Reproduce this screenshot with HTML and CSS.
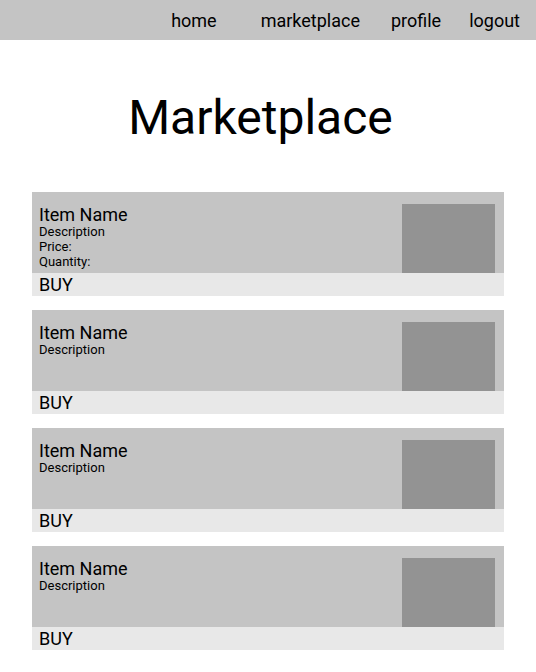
FILE: index.html
```html
<!DOCTYPE html>
<html>
<head>
<meta charset="utf-8">
<link rel="stylesheet" href="styles.css">
</head>
<body>
<nav class="topnav">
  <a class="nav-link" href="#">home</a>
  <a class="nav-link nav-market" href="#">marketplace</a>
  <a class="nav-link nav-profile" href="#">profile</a>
  <a class="nav-link nav-logout" href="#">logout</a>
</nav>
<h1 class="page-title">Marketplace</h1>
<main class="items">
  <section class="item">
    <div class="item-main">
      <div class="item-info">
        <div class="item-name">Item Name</div>
        <div class="item-detail">Description</div>
        <div class="item-detail">Price:</div>
        <div class="item-detail">Quantity:</div>
      </div>
      <div class="item-image"></div>
    </div>
    <div class="item-buy">BUY</div>
  </section>
  <section class="item">
    <div class="item-main">
      <div class="item-info">
        <div class="item-name">Item Name</div>
        <div class="item-detail">Description</div>
      </div>
      <div class="item-image"></div>
    </div>
    <div class="item-buy">BUY</div>
  </section>
  <section class="item">
    <div class="item-main">
      <div class="item-info">
        <div class="item-name">Item Name</div>
        <div class="item-detail">Description</div>
      </div>
      <div class="item-image"></div>
    </div>
    <div class="item-buy">BUY</div>
  </section>
  <section class="item">
    <div class="item-main">
      <div class="item-info">
        <div class="item-name">Item Name</div>
        <div class="item-detail">Description</div>
      </div>
      <div class="item-image"></div>
    </div>
    <div class="item-buy">BUY</div>
  </section>
</main>
</body>
</html>
```

FILE: styles.css
```css
html, body {
  margin: 0;
  padding: 0;
  background: #ffffff;
}

body {
  font-family: Roboto, "Noto Sans", sans-serif;
  color: #000000;
}

.topnav {
  display: flex;
  justify-content: flex-end;
  align-items: center;
  height: 40px;
  background: #c4c4c4;
  padding-right: 16px;
}

.nav-link {
  font-size: 18px;
  color: #000000;
  text-decoration: none;
  line-height: 21px;
}

.nav-market {
  margin-left: 44px;
}

.nav-profile {
  margin-left: 31px;
}

.nav-logout {
  margin-left: 28px;
}

.page-title {
  margin: 50px 0 0 0;
  padding-right: 15px;
  text-align: center;
  font-size: 48px;
  font-weight: 400;
  line-height: 56px;
}

.items {
  display: flex;
  flex-direction: column;
  gap: 14px;
  margin: 46px 32px 0 32px;
}

.item-main {
  display: flex;
  justify-content: space-between;
  height: 81px;
  background: #c4c4c4;
  padding-left: 7px;
  padding-right: 9px;
}

.item-info {
  padding-top: 13px;
}

.item-name {
  font-size: 18px;
  line-height: 19px;
}

.item-detail {
  font-size: 13px;
  line-height: 15px;
}

.item-image {
  align-self: flex-end;
  width: 93px;
  height: 69px;
  background: #939393;
}

.item-buy {
  height: 22px;
  padding-top: 1px;
  background: #e8e8e8;
  padding-left: 7px;
  font-size: 18px;
  line-height: 21px;
}
```
